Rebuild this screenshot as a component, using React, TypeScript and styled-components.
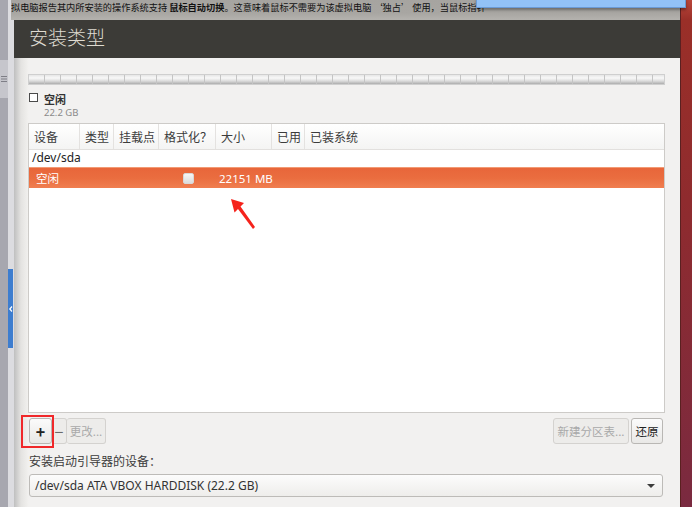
import React from "react";
import styled, { createGlobalStyle } from "styled-components";

const GlobalStyle = createGlobalStyle`
  html, body {
    margin: 0;
    padding: 0;
    background: #f2f1f0;
  }
  body {
    font-family: "Noto Sans", "Noto Sans CJK SC", sans-serif;
    color: #3c3c3c;
  }
`;

const columns = [
  { id: "dev", title: "设备" },
  { id: "type", title: "类型" },
  { id: "mount", title: "挂载点" },
  { id: "format", title: "格式化？" },
  { id: "size", title: "大小" },
  { id: "used", title: "已用" },
  { id: "os", title: "已装系统" },
];

const App = (): JSX.Element => {
  return (
    <>
      <GlobalStyle />
      <Screen>
        <LeftRail>
          <RailOuter>
            <RailMenu>
              <svg width="6" height="8" viewBox="0 0 6 8">
                <path d="M0 1.5h6M0 4h6M0 6.5h6" stroke="#7e7e86" strokeWidth="1" />
              </svg>
            </RailMenu>
          </RailOuter>
          <RailInner>
            <RailTab>
              <svg width="4" height="6" viewBox="0 0 4 6">
                <path d="M3 0.5L0.8 3L3 5.5" stroke="#ffffff" strokeWidth="1.2" fill="none" />
              </svg>
            </RailTab>
          </RailInner>
        </LeftRail>

        <Main>
          <Notice>
            <span>拟电脑报告其内所安装的操作系统支持 </span>
            <b>鼠标自动切换</b>
            <span>。这意味着鼠标不需要为该虚拟电脑 ‘独占’ 使用，当鼠标指针</span>
          </Notice>
          <Header>安装类型</Header>

          <Content>
            <PartitionBar />
            <Legend>
              <LegendBox />
              <LegendText>
                <strong>空闲</strong>
                <small>22.2 GB</small>
              </LegendText>
            </Legend>

            <Table>
              <HeadRow>
                {columns.map((c) => (
                  <HeadCell key={c.id}>{c.title}</HeadCell>
                ))}
              </HeadRow>
              <DiskRow>/dev/sda</DiskRow>
              <PartRow>
                <PartCell $indent>空闲</PartCell>
                <PartCell />
                <PartCell />
                <PartCell $center>
                  <CheckBox />
                </PartCell>
                <PartCell>22151 MB</PartCell>
                <PartCell />
                <PartCell />
              </PartRow>
              <Arrow viewBox="0 0 26 32">
                <path d="M1 1 L14 5 L10.5 8.5 L25 29 L23 31 L8 11 L4.5 14.5 Z" fill="#f5231c" />
              </Arrow>
            </Table>

            <ButtonBar>
              <ButtonGroup>
                <Highlight />
                <ToolButton $w={23} $big>+</ToolButton>
                <ToolButton $w={15} $joined $big $muted>−</ToolButton>
                <ToolButton $w={39} $disabled $joined>更改...</ToolButton>
              </ButtonGroup>
              <ButtonGroup $gap={2}>
                <ToolButton $w={76} $disabled>新建分区表...</ToolButton>
                <ToolButton $w={32}>还原</ToolButton>
              </ButtonGroup>
            </ButtonBar>

            <FieldLabel>安装启动引导器的设备：</FieldLabel>
            <Select>
              <span>/dev/sda ATA VBOX HARDDISK (22.2 GB)</span>
              <Caret />
            </Select>
          </Content>
        </Main>

        <RightRail>
          <Popup />
        </RightRail>
      </Screen>
    </>
  );
};

const Screen = styled.div`
  position: relative;
  width: 692px;
  height: 507px;
  display: grid;
  grid-template-columns: 14px 666px 12px;
  overflow: hidden;
`;

const LeftRail = styled.div`
  display: grid;
  grid-template-columns: 8px 6px;
  background: #a8a8b0;
`;

const RailOuter = styled.div`
  background: #a7a7af;
  padding-top: 60px;
`;

const RailMenu = styled.div`
  height: 38px;
  background: #c6c6cc;
  display: flex;
  align-items: center;
  justify-content: center;
`;

const RailInner = styled.div`
  background: #dcdce0;
  padding-top: 269px;
`;

const RailTab = styled.div`
  height: 79px;
  width: 5px;
  background: #3d7dcf;
  display: flex;
  align-items: center;
  justify-content: center;
`;

const Main = styled.div`
  display: flex;
  flex-direction: column;
  min-width: 0;
`;

const Notice = styled.div`
  height: 20px;
  margin-left: -3px;
  background: linear-gradient(#a6a4a0 0, #a8a6a2 13px, #b4b2ae 20px);
  color: #111;
  font-size: 9.2px;
  line-height: 15px;
  white-space: nowrap;
  overflow: hidden;
  font-family: "Noto Sans CJK SC", sans-serif;

  b {
    font-weight: 700;
  }
`;

const Header = styled.div`
  height: 38px;
  background: #3c3b37;
  color: #dfdbd2;
  font-size: 19px;
  line-height: 20px;
  padding: 7px 0 0 15px;
  box-sizing: border-box;
  font-family: "Noto Sans CJK SC", sans-serif;
  font-weight: 300;
`;

const Content = styled.div`
  flex: 1;
  padding: 16px 15px 0 14px;
  background: linear-gradient(90deg, #bfbfbf 0, #e4e3e1 7px, #f1f0ee 14px, #f2f1f0 15px);
  display: flex;
  flex-direction: column;
`;

const PartitionBar = styled.div`
  height: 11px;
  border: 1px solid #cfcfcf;
  box-sizing: border-box;
  background:
    repeating-linear-gradient(90deg, transparent 0 15px, #c4c4c4 15px 16px),
    linear-gradient(#e6e6e6 0, #f8f8f8 3px, #dcdcdc 6px, #9e9e9e 10px);
`;

const Legend = styled.div`
  display: flex;
  gap: 6px;
  margin-top: 8px;
  padding-left: 1px;
`;

const LegendBox = styled.div`
  width: 7px;
  height: 7px;
  border: 1px solid #4a4a4a;
  background: #fff;
`;

const LegendText = styled.div`
  display: flex;
  flex-direction: column;
  strong {
    font-size: 11px;
    line-height: 14px;
    color: #333;
    font-weight: 700;
  }
  small {
    font-size: 9.5px;
    line-height: 12px;
    color: #8a8a8a;
  }
`;

const Table = styled.div`
  position: relative;
  margin-top: 4px;
  height: 288px;
  border: 1px solid #cdcbc8;
  background: #ffffff;
  font-size: 12px;
  color: #3c3c3c;
`;

const gridCols = "51px 34px 45px 57px 56px 33px 1fr";

const HeadRow = styled.div`
  display: grid;
  grid-template-columns: ${gridCols};
  height: 26px;
  background: linear-gradient(#ffffff, #f4f4f3);
  border-bottom: 1px solid #e2e0de;
  box-sizing: border-box;
  font-family: "Noto Sans CJK SC", sans-serif;
`;

const HeadCell = styled.div`
  padding-left: 5px;
  line-height: 25px;
  border-right: 1px solid #e4e2e0;
  white-space: nowrap;
  overflow: hidden;
  &:last-child {
    border-right: none;
  }
`;

const DiskRow = styled.div`
  height: 17px;
  line-height: 16px;
  padding-left: 3px;
  font-size: 12px;
  color: #222;
`;

const PartRow = styled.div`
  display: grid;
  grid-template-columns: ${gridCols};
  height: 21px;
  align-items: center;
  background: linear-gradient(#e8663a 0, #ea6d3f 50%, #f07e50 100%);
  border-top: 1px solid #f29a74;
  box-sizing: border-box;
  color: #ffffff;
  font-size: 11.5px;
`;

const PartCell = styled.div<{ $indent?: boolean; $center?: boolean }>`
  padding-left: ${(p) => (p.$indent ? "7px" : "3px")};
  display: flex;
  justify-content: ${(p) => (p.$center ? "center" : "flex-start")};
  white-space: nowrap;
`;

const CheckBox = styled.div`
  width: 9px;
  height: 9px;
  border: 1px solid #d8d8d8;
  border-radius: 2px;
  background: linear-gradient(#f6f6f6, #dcdcdc);
  margin-right: 2px;
`;

const Arrow = styled.svg`
  position: absolute;
  left: 201px;
  top: 74px;
  width: 26px;
  height: 32px;
`;

const ButtonBar = styled.div`
  display: flex;
  justify-content: space-between;
  margin: 5px 2px 0 1px;
`;

const ButtonGroup = styled.div<{ $gap?: number }>`
  position: relative;
  display: flex;
  gap: ${(p) => p.$gap ?? 0}px;
`;

const ToolButton = styled.div<{
  $w: number;
  $disabled?: boolean;
  $joined?: boolean;
  $big?: boolean;
  $muted?: boolean;
}>`
  width: ${(p) => p.$w}px;
  height: 26px;
  box-sizing: border-box;
  border: 1px solid ${(p) => (p.$disabled || p.$muted ? "#d4d2cf" : "#b9b7b4")};
  border-left-width: ${(p) => (p.$joined ? 0 : 1)}px;
  border-radius: 3px;
  background: ${(p) =>
    p.$disabled || p.$muted ? "#edecea" : "linear-gradient(#fbfbfb, #e9e8e6)"};
  color: ${(p) => (p.$disabled ? "#a9a9a9" : p.$muted ? "#6a6a6a" : "#222")};
  font-size: ${(p) => (p.$big ? "16px" : "11.5px")};
  font-weight: ${(p) => (p.$big && !p.$muted ? 700 : 400)};
  line-height: 24px;
  text-align: center;
  white-space: nowrap;
  overflow: hidden;
  font-family: "Noto Sans CJK SC", sans-serif;
`;

const Highlight = styled.div`
  position: absolute;
  left: -8px;
  top: -3px;
  width: 29px;
  height: 29px;
  border: 2px solid #f0282a;
  pointer-events: none;
  z-index: 2;
`;

const FieldLabel = styled.div`
  margin: 9px 0 0 1px;
  font-size: 12px;
  line-height: 16px;
  color: #3c3c3c;
  font-family: "Noto Sans CJK SC", sans-serif;
`;

const Select = styled.div`
  margin: 5px 2px 0 1px;
  height: 23px;
  box-sizing: border-box;
  border: 1px solid #bdbbb8;
  border-radius: 3px;
  background: linear-gradient(#fcfcfc, #eeedeb);
  display: flex;
  align-items: center;
  justify-content: space-between;
  padding: 0 7px 0 5px;
  font-size: 12px;
  color: #333;
`;

const Caret = styled.div`
  width: 0;
  height: 0;
  border-left: 4px solid transparent;
  border-right: 4px solid transparent;
  border-top: 4px solid #3c3c3c;
`;

const RightRail = styled.div`
  position: relative;
  background: linear-gradient(#b8453a 0, #9a2f28 20px, #8f2b2e 200px, #7a2a40 507px);
  border-left: 1px solid #5a2020;
`;

const Popup = styled.div`
  position: absolute;
  right: 6px;
  top: -2px;
  width: 208px;
  height: 8px;
  background: #92c2f7;
  border: 1px solid #6b9bd6;
  box-shadow: 0 2px 3px rgba(0, 0, 0, 0.35);
`;

export default App;
